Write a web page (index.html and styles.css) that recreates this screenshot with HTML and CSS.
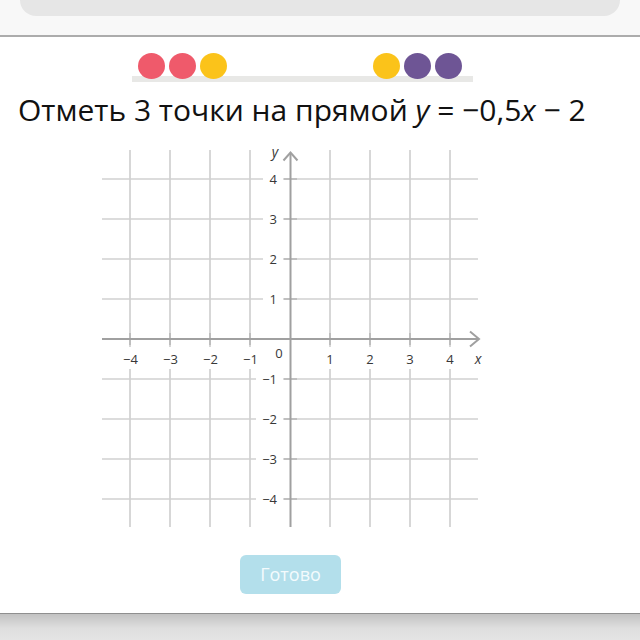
FILE: index.html
```html
<!DOCTYPE html>
<html lang="ru">
<head>
<meta charset="utf-8">
<title>Отметь 3 точки</title>
<link rel="stylesheet" href="styles.css">
</head>
<body>
<div class="page">
  <header class="top"><div class="search"></div></header>
  <div class="progress">
    <div class="group">
      <span class="dot red"></span><span class="dot red"></span><span class="dot yellow"></span>
    </div>
    <div class="group">
      <span class="dot yellow"></span><span class="dot purple"></span><span class="dot purple"></span>
    </div>
  </div>
  <h1 class="task">Отметь 3 точки на прямой <i>y</i> = −0,5<i>x</i> − 2</h1>
  <svg class="graph" width="400" height="392" viewBox="90 140 400 392" xmlns="http://www.w3.org/2000/svg">
    <g stroke="#d0d0d0" stroke-width="1.7">
      <line x1="130" y1="150" x2="130" y2="527"/>
      <line x1="170" y1="150" x2="170" y2="527"/>
      <line x1="210" y1="150" x2="210" y2="527"/>
      <line x1="250" y1="150" x2="250" y2="527"/>
      <line x1="330" y1="150" x2="330" y2="527"/>
      <line x1="370" y1="150" x2="370" y2="527"/>
      <line x1="410" y1="150" x2="410" y2="527"/>
      <line x1="450" y1="150" x2="450" y2="527"/>
      <line x1="102" y1="179" x2="478" y2="179"/>
      <line x1="102" y1="219" x2="478" y2="219"/>
      <line x1="102" y1="259" x2="478" y2="259"/>
      <line x1="102" y1="299" x2="478" y2="299"/>
      <line x1="102" y1="379" x2="478" y2="379"/>
      <line x1="102" y1="419" x2="478" y2="419"/>
      <line x1="102" y1="459" x2="478" y2="459"/>
      <line x1="102" y1="499" x2="478" y2="499"/>
    </g>
    <g fill="#ffffff">
      <rect x="263" y="172" width="20" height="14"/>
      <rect x="263" y="212" width="20" height="14"/>
      <rect x="263" y="252" width="20" height="14"/>
      <rect x="263" y="292" width="20" height="14"/>
      <rect x="256" y="372" width="27" height="14"/>
      <rect x="256" y="412" width="27" height="14"/>
      <rect x="256" y="452" width="27" height="14"/>
      <rect x="256" y="492" width="27" height="14"/>
      <rect x="120" y="347" width="22" height="22"/>
      <rect x="160" y="347" width="22" height="22"/>
      <rect x="200" y="347" width="22" height="22"/>
      <rect x="240" y="347" width="22" height="22"/>
      <rect x="323" y="347" width="14" height="22"/>
      <rect x="363" y="347" width="14" height="22"/>
      <rect x="403" y="347" width="14" height="22"/>
      <rect x="443" y="347" width="14" height="22"/>
    </g>
    <g stroke="#bababa" stroke-width="1.7">
      <line x1="130" y1="333" x2="130" y2="345"/>
      <line x1="170" y1="333" x2="170" y2="345"/>
      <line x1="210" y1="333" x2="210" y2="345"/>
      <line x1="250" y1="333" x2="250" y2="345"/>
      <line x1="330" y1="333" x2="330" y2="345"/>
      <line x1="370" y1="333" x2="370" y2="345"/>
      <line x1="410" y1="333" x2="410" y2="345"/>
      <line x1="450" y1="333" x2="450" y2="345"/>
      <line x1="284" y1="179" x2="297" y2="179"/>
      <line x1="284" y1="219" x2="297" y2="219"/>
      <line x1="284" y1="259" x2="297" y2="259"/>
      <line x1="284" y1="299" x2="297" y2="299"/>
      <line x1="284" y1="379" x2="297" y2="379"/>
      <line x1="284" y1="419" x2="297" y2="419"/>
      <line x1="284" y1="459" x2="297" y2="459"/>
      <line x1="284" y1="499" x2="297" y2="499"/>
    </g>
    <g stroke="#a0a0a0" stroke-width="2" fill="none">
      <line x1="290.5" y1="153" x2="290.5" y2="527"/>
      <line x1="102" y1="339" x2="479" y2="339"/>
      <polyline points="283.5,160.5 290.5,152.5 297.5,160.5"/>
      <polyline points="470,331.5 479,339 470,346.5"/>
    </g>
    <g class="lbl">
      <text x="277" y="183.5" text-anchor="end">4</text>
      <text x="277" y="223.5" text-anchor="end">3</text>
      <text x="277" y="263.5" text-anchor="end">2</text>
      <text x="277" y="303.5" text-anchor="end">1</text>
      <text x="277" y="383.5" text-anchor="end">−1</text>
      <text x="277" y="423.5" text-anchor="end">−2</text>
      <text x="277" y="463.5" text-anchor="end">−3</text>
      <text x="277" y="503.5" text-anchor="end">−4</text>
      <text x="130.5" y="363.5" text-anchor="middle">−4</text>
      <text x="170.5" y="363.5" text-anchor="middle">−3</text>
      <text x="210.5" y="363.5" text-anchor="middle">−2</text>
      <text x="250.5" y="363.5" text-anchor="middle">−1</text>
      <text x="279" y="357.5" text-anchor="middle">0</text>
      <text x="330" y="363.5" text-anchor="middle">1</text>
      <text x="370" y="363.5" text-anchor="middle">2</text>
      <text x="410" y="363.5" text-anchor="middle">3</text>
      <text x="450" y="363.5" text-anchor="middle">4</text>
      <text class="var" x="478" y="364" text-anchor="middle">x</text>
      <text class="var" x="275" y="156.5" text-anchor="middle">y</text>
    </g>
  </svg>
  <button class="done" type="button">Готово</button>
  <footer class="bottom"></footer>
</div>
</body>
</html>
```

FILE: styles.css
```css
html, body {
  margin: 0;
  padding: 0;
  width: 640px;
  height: 640px;
  overflow: hidden;
  background: #ffffff;
}

.page {
  width: 640px;
  height: 640px;
  display: flex;
  flex-direction: column;
  font-family: "Open Sans", "Noto Sans", sans-serif;
  color: #1a1a1a;
}

.top {
  height: 35px;
  flex: none;
  background: #f8f8f8;
  border-bottom: 2px solid #acacac;
}

.search {
  margin: 0 20px;
  height: 16px;
  background: #e6e6e6;
  border-radius: 0 0 20px 20px;
}

.progress {
  flex: none;
  width: 341px;
  height: 29px;
  margin: 16px 0 0 132px;
  padding: 0 11px 0 6px;
  box-sizing: border-box;
  display: flex;
  justify-content: space-between;
  align-items: flex-start;
  background: linear-gradient(#e8e8e6, #e8e8e6) left bottom / 100% 6px no-repeat;
}

.group {
  display: flex;
  gap: 4px;
}

.dot {
  display: block;
  width: 27px;
  height: 26px;
  border-radius: 50%;
}

.red { background: #ef5a6b; }
.yellow { background: #fbc31a; }
.purple { background: #6e5595; }

.task {
  flex: none;
  margin: 8px 0 0 18px;
  font-size: 30px;
  line-height: 40px;
  font-weight: 400;
  white-space: nowrap;
  color: #111111;
}

.task i {
  font-style: italic;
}

.graph {
  flex: none;
  display: block;
  margin: 10px 0 0 90px;
}

.lbl text {
  font-family: "Open Sans", "Noto Sans", sans-serif;
  font-size: 13px;
  fill: #383838;
}

.lbl .var {
  font-style: italic;
  font-size: 14px;
}

.done {
  flex: none;
  align-self: flex-start;
  width: 101px;
  height: 39px;
  margin: 23px 0 0 240px;
  padding: 0;
  border: none;
  border-radius: 6px;
  background: #b3dfeb;
  color: #f4fbfd;
  font-family: "Open Sans", "Noto Sans", sans-serif;
  font-size: 18px;
  line-height: 39px;
  text-align: center;
}

.bottom {
  flex: 1;
  margin-top: 19px;
  border-top: 1px solid #8f8f8f;
  background: linear-gradient(#c2c2c2, #dedede 14px, #e4e4e4);
}
```
